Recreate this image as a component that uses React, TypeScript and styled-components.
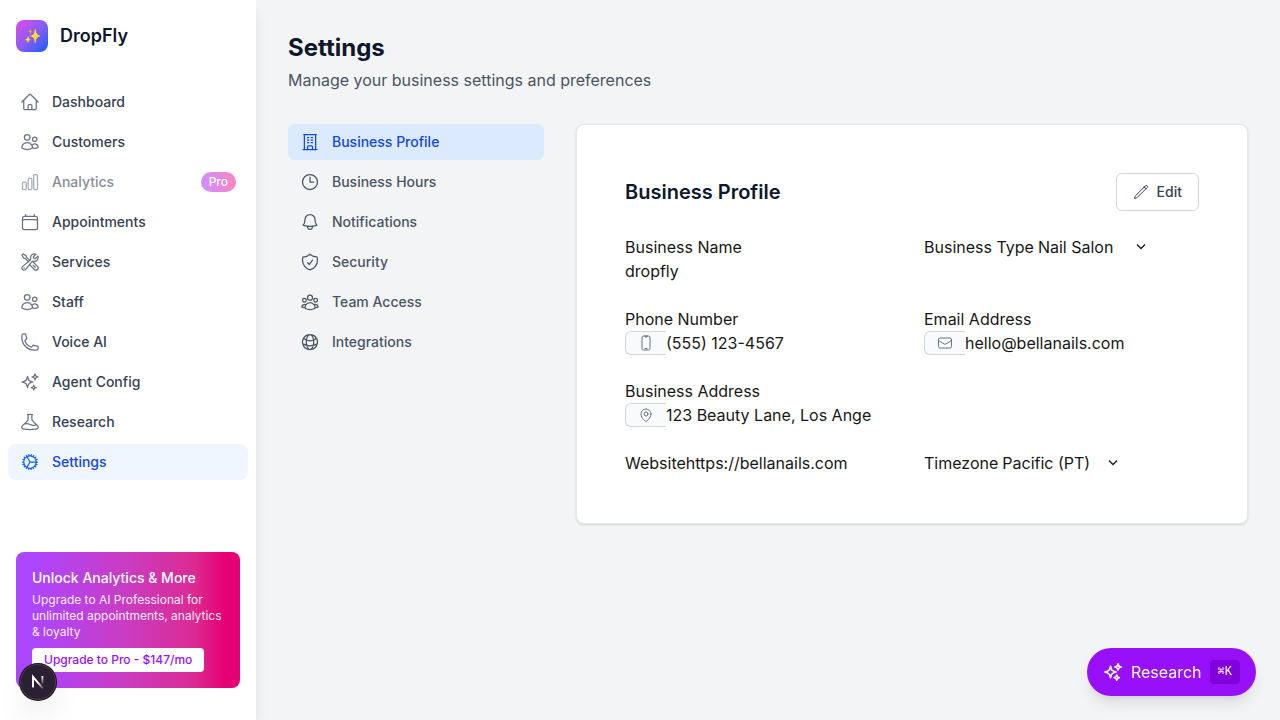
import React from 'react';
import styled, { createGlobalStyle, css } from 'styled-components';
import {
  HiOutlineHome,
  HiOutlineUsers,
  HiOutlineChartBar,
  HiOutlineCalendar,
  HiOutlineWrenchScrewdriver,
  HiOutlinePhone,
  HiOutlineSparkles,
  HiOutlineBeaker,
  HiOutlineCog,
  HiOutlineBuildingOffice,
  HiOutlineClock,
  HiOutlineBell,
  HiOutlineShieldCheck,
  HiOutlineUserGroup,
  HiOutlineGlobeAlt,
  HiOutlinePencil,
  HiOutlineDevicePhoneMobile,
  HiOutlineEnvelope,
  HiOutlineMapPin,
} from 'react-icons/hi2';
import type { IconType } from 'react-icons';

const GlobalStyle = createGlobalStyle`
  *, *::before, *::after { box-sizing: border-box; }
  body {
    margin: 0;
    background: #f3f4f6;
    color: #171717;
    font-family: Inter, "Liberation Sans", sans-serif;
    font-size: 16px;
    line-height: 24px;
    -webkit-font-smoothing: antialiased;
  }
  h1, h2, h3, p, ul { margin: 0; padding: 0; }
  ul { list-style: none; }
  a { color: inherit; text-decoration: none; }
  button, input, select { font: inherit; color: inherit; margin: 0; }
  svg { display: block; flex-shrink: 0; }
`;

const Shell = styled.div`
  display: flex;
  min-height: 100vh;
`;

const Sidebar = styled.aside`
  position: sticky;
  top: 0;
  display: flex;
  flex-direction: column;
  flex: 0 0 256px;
  height: 100vh;
  background: #fff;
  box-shadow: 0 10px 15px -3px rgba(0, 0, 0, 0.1), 0 4px 6px -4px rgba(0, 0, 0, 0.1);
`;

const Brand = styled.div`
  display: flex;
  align-items: center;
  gap: 12px;
  padding: 20px 16px;
  color: #0f172b;
  font-size: 18px;
  font-weight: 600;
`;

const BrandMark = styled.span`
  display: flex;
  align-items: center;
  justify-content: center;
  width: 32px;
  height: 32px;
  border-radius: 8px;
  background: linear-gradient(to bottom right, #e14be8, #8b5cf6 50%, #155dfc);
  color: #fff;
  font-size: 14px;
  line-height: 20px;
`;

const MainNav = styled.nav`
  flex: 1;
  padding: 12px 8px;
`;

const NavList = styled.ul`
  display: flex;
  flex-direction: column;
  gap: 4px;
`;

const navRow = css`
  display: flex;
  align-items: center;
  gap: 12px;
  width: 100%;
  padding: 8px 12px;
  font-size: 14px;
  font-weight: 500;
  line-height: 20px;
`;

const NavLink = styled.a<{ $active?: boolean; $locked?: boolean }>`
  ${navRow}
  border-radius: 8px;
  background: ${(p) => (p.$active ? '#eff6ff' : 'transparent')};
  color: ${(p) => (p.$active ? '#1447e6' : '#364153')};
  opacity: ${(p) => (p.$locked ? 0.6 : 1)};

  svg { color: ${(p) => (p.$active ? '#155dfc' : '#6a7282')}; }
`;

const ProBadge = styled.span`
  margin-left: auto;
  padding: 2px 8px;
  border-radius: 10px;
  background: linear-gradient(to right, #ad46ff, #f6339a);
  color: #fff;
  font-size: 12px;
  line-height: 16px;
`;

const Promo = styled.section`
  margin: 0 16px 32px;
  padding: 16px;
  border-radius: 8px;
  background: linear-gradient(to right, #ad46ff 8%, #ca3cc0 50%, #dc2a92 80%, #e60076 93%);
  color: #fff;
`;

const PromoTitle = styled.h3`
  font-size: 14px;
  font-weight: 500;
  line-height: 20px;
`;

const PromoText = styled.p`
  margin: 4px 0 8px;
  font-size: 12px;
  line-height: 16px;
  opacity: 0.9;
`;

const PromoButton = styled.button`
  display: block;
  padding: 4px 12px;
  border: 0;
  border-radius: 4px;
  background: #fff;
  color: #9810fa;
  font-size: 12px;
  font-weight: 500;
  line-height: 16px;
`;

const Main = styled.main`
  flex: 1;
  min-width: 0;
  padding: 32px;
`;

const PageTitle = styled.h1`
  color: #0f172b;
  font-size: 24px;
  font-weight: 700;
  line-height: 32px;
`;

const PageLead = styled.p`
  margin-top: 4px;
  color: #4a5565;
`;

const Columns = styled.div`
  display: flex;
  align-items: flex-start;
  gap: 32px;
  margin-top: 32px;
`;

const SectionNav = styled.nav`
  flex: 0 0 256px;
`;

const SectionTab = styled.button<{ $active?: boolean }>`
  ${navRow}
  border: 0;
  border-radius: 6px;
  background: ${(p) => (p.$active ? '#dbeafe' : 'transparent')};
  color: ${(p) => (p.$active ? '#1447e6' : '#4a5565')};
  text-align: left;
`;

const Card = styled.section`
  flex: 1;
  min-width: 0;
  padding: 48px;
  border: 1px solid #e5e7eb;
  border-radius: 8px;
  background: #fff;
  box-shadow: 0 1px 3px rgba(0, 0, 0, 0.1), 0 1px 2px -1px rgba(0, 0, 0, 0.1);
`;

const CardHeader = styled.div`
  display: flex;
  align-items: center;
  justify-content: space-between;
  margin-bottom: 24px;
`;

const CardTitle = styled.h2`
  color: #0f172b;
  font-size: 20px;
  font-weight: 600;
  line-height: 28px;
`;

const EditButton = styled.button`
  display: flex;
  align-items: center;
  gap: 8px;
  padding: 8px 16px;
  border: 1px solid #d1d5dc;
  border-radius: 6px;
  background: #fff;
  color: #364153;
  font-size: 14px;
  font-weight: 500;
  line-height: 20px;
`;

const Fields = styled.form`
  display: grid;
  grid-template-columns: repeat(2, minmax(0, 1fr));
  gap: 24px;
`;

const Field = styled.div<{ $inline?: boolean; $wide?: boolean }>`
  display: flex;
  flex-direction: ${(p) => (p.$inline ? 'row' : 'column')};
  align-items: flex-start;
  grid-column: ${(p) => (p.$wide ? '1 / -1' : 'auto')};
`;

const InputGroup = styled.div`
  display: flex;
`;

const Addon = styled.span`
  display: flex;
  align-items: center;
  padding: 0 12px;
  border: 1px solid #d1d5dc;
  border-right: 0;
  border-radius: 6px 0 0 6px;
  background: #f9fafb;
  color: #6a7282;
`;

const TextInput = styled.input`
  width: 208px;
  height: 24px;
  padding: 0;
  border: 0;
  background: transparent;
`;

const SelectWrap = styled.div`
  display: grid;
  align-items: center;

  > * { grid-area: 1 / 1; }
  > svg {
    justify-self: end;
    pointer-events: none;
  }
`;

const SelectBox = styled.select<{ $width: number }>`
  appearance: none;
  width: ${(p) => p.$width}px;
  height: 24px;
  padding: 0 16px 0 4px;
  border: 0;
  background: transparent;
`;

const ResearchButton = styled.button`
  position: fixed;
  right: 24px;
  bottom: 24px;
  display: flex;
  align-items: center;
  gap: 8px;
  padding: 12px 16px;
  border: 0;
  border-radius: 24px;
  background: #9810fa;
  color: #fff;
  box-shadow: 0 10px 15px -3px rgba(0, 0, 0, 0.1), 0 4px 6px -4px rgba(0, 0, 0, 0.1);

  svg { stroke-width: 2; }
`;

const Shortcut = styled.kbd`
  padding: 4px 8px;
  border-radius: 4px;
  background: #8200db;
  font-family: "Liberation Mono", "DejaVu Sans Mono", monospace;
  font-size: 12px;
  line-height: 16px;
`;

const DevBadge = styled.button`
  position: fixed;
  left: 20px;
  bottom: 20px;
  display: flex;
  align-items: center;
  justify-content: center;
  width: 36px;
  height: 36px;
  padding: 0;
  border: 1px solid #4a4050;
  border-radius: 50%;
  background: #2b1f33;
  box-shadow: 0 0 0 1px #171717, 0 16px 32px -8px rgba(0, 0, 0, 0.24);
`;

const mainLinks: { label: string; icon: IconType; active?: boolean; locked?: boolean }[] = [
  { label: 'Dashboard', icon: HiOutlineHome },
  { label: 'Customers', icon: HiOutlineUsers },
  { label: 'Analytics', icon: HiOutlineChartBar, locked: true },
  { label: 'Appointments', icon: HiOutlineCalendar },
  { label: 'Services', icon: HiOutlineWrenchScrewdriver },
  { label: 'Staff', icon: HiOutlineUsers },
  { label: 'Voice AI', icon: HiOutlinePhone },
  { label: 'Agent Config', icon: HiOutlineSparkles },
  { label: 'Research', icon: HiOutlineBeaker },
  { label: 'Settings', icon: HiOutlineCog, active: true },
];

const sections: { label: string; icon: IconType }[] = [
  { label: 'Business Profile', icon: HiOutlineBuildingOffice },
  { label: 'Business Hours', icon: HiOutlineClock },
  { label: 'Notifications', icon: HiOutlineBell },
  { label: 'Security', icon: HiOutlineShieldCheck },
  { label: 'Team Access', icon: HiOutlineUserGroup },
  { label: 'Integrations', icon: HiOutlineGlobeAlt },
];

function FrameworkLogo() {
  return (
    <svg width="16" height="16" viewBox="0 0 16 16" fill="none" aria-hidden="true">
      <defs>
        <linearGradient id="stem" x1="12" y1="2" x2="12" y2="11" gradientUnits="userSpaceOnUse">
          <stop stopColor="#fff" />
          <stop offset="1" stopColor="#fff" stopOpacity="0" />
        </linearGradient>
        <linearGradient id="diagonal" x1="8" y1="8" x2="13" y2="14" gradientUnits="userSpaceOnUse">
          <stop stopColor="#fff" />
          <stop offset="1" stopColor="#fff" stopOpacity="0.2" />
        </linearGradient>
      </defs>
      <path d="M3 13.6V2.8L13 14.6" stroke="url(#diagonal)" strokeWidth="1.9" />
      <path d="M12.4 2v9" stroke="url(#stem)" strokeWidth="1.8" />
    </svg>
  );
}

interface SelectProps {
  id: string;
  width: number;
  options: string[];
}

function Select({ id, width, options }: SelectProps) {
  return (
    <SelectWrap>
      <SelectBox id={id} $width={width} defaultValue={options[0]}>
        {options.map((option) => (
          <option key={option}>{option}</option>
        ))}
      </SelectBox>
      <svg width="10" height="10" viewBox="0 0 10 10" fill="none" aria-hidden="true">
        <path d="M1 2.5 5 6.5 9 2.5" stroke="currentColor" strokeWidth="1.3" />
      </svg>
    </SelectWrap>
  );
}

export default function App() {
  const [section, setSection] = React.useState('Business Profile');

  return (
    <>
      <GlobalStyle />
      <Shell>
        <Sidebar>
          <Brand>
            <BrandMark>✨</BrandMark>
            DropFly
          </Brand>
          <MainNav aria-label="Main">
            <NavList>
              {mainLinks.map(({ label, icon: Icon, active, locked }) => (
                <li key={label}>
                  <NavLink href="#" $active={active} $locked={locked}>
                    <Icon size={20} />
                    {label}
                    {locked && <ProBadge>Pro</ProBadge>}
                  </NavLink>
                </li>
              ))}
            </NavList>
          </MainNav>
          <Promo>
            <PromoTitle>Unlock Analytics &amp; More</PromoTitle>
            <PromoText>Upgrade to AI Professional for unlimited appointments, analytics &amp; loyalty</PromoText>
            <PromoButton type="button">Upgrade to Pro - $147/mo</PromoButton>
          </Promo>
        </Sidebar>

        <Main>
          <PageTitle>Settings</PageTitle>
          <PageLead>Manage your business settings and preferences</PageLead>
          <Columns>
            <SectionNav aria-label="Settings sections">
              <NavList>
                {sections.map(({ label, icon: Icon }) => (
                  <li key={label}>
                    <SectionTab type="button" $active={label === section} onClick={() => setSection(label)}>
                      <Icon size={20} />
                      {label}
                    </SectionTab>
                  </li>
                ))}
              </NavList>
            </SectionNav>

            <Card>
              <CardHeader>
                <CardTitle>Business Profile</CardTitle>
                <EditButton type="button">
                  <HiOutlinePencil size={16} />
                  Edit
                </EditButton>
              </CardHeader>
              <Fields>
                <Field>
                  <label htmlFor="name">Business Name</label>
                  <TextInput id="name" defaultValue="dropfly" />
                </Field>
                <Field $inline>
                  <label htmlFor="type">Business Type</label>
                  <Select id="type" width={112} options={['Nail Salon']} />
                </Field>
                <Field>
                  <label htmlFor="phone">Phone Number</label>
                  <InputGroup>
                    <Addon><HiOutlineDevicePhoneMobile size={16} /></Addon>
                    <TextInput id="phone" type="tel" defaultValue="(555) 123-4567" />
                  </InputGroup>
                </Field>
                <Field>
                  <label htmlFor="email">Email Address</label>
                  <InputGroup>
                    <Addon><HiOutlineEnvelope size={16} /></Addon>
                    <TextInput id="email" type="email" defaultValue="hello@bellanails.com" />
                  </InputGroup>
                </Field>
                <Field $wide>
                  <label htmlFor="address">Business Address</label>
                  <InputGroup>
                    <Addon><HiOutlineMapPin size={16} /></Addon>
                    <TextInput id="address" defaultValue="123 Beauty Lane, Los Ange" />
                  </InputGroup>
                </Field>
                <Field $inline>
                  <label htmlFor="website">Website</label>
                  <TextInput id="website" type="url" defaultValue="https://bellanails.com" />
                </Field>
                <Field $inline>
                  <label htmlFor="timezone">Timezone</label>
                  <Select id="timezone" width={120} options={['Pacific (PT)']} />
                </Field>
              </Fields>
            </Card>
          </Columns>
        </Main>
      </Shell>

      <ResearchButton type="button">
        <HiOutlineSparkles size={20} />
        Research
        <Shortcut>⌘K</Shortcut>
      </ResearchButton>
      <DevBadge type="button" aria-label="Developer tools">
        <FrameworkLogo />
      </DevBadge>
    </>
  );
}
